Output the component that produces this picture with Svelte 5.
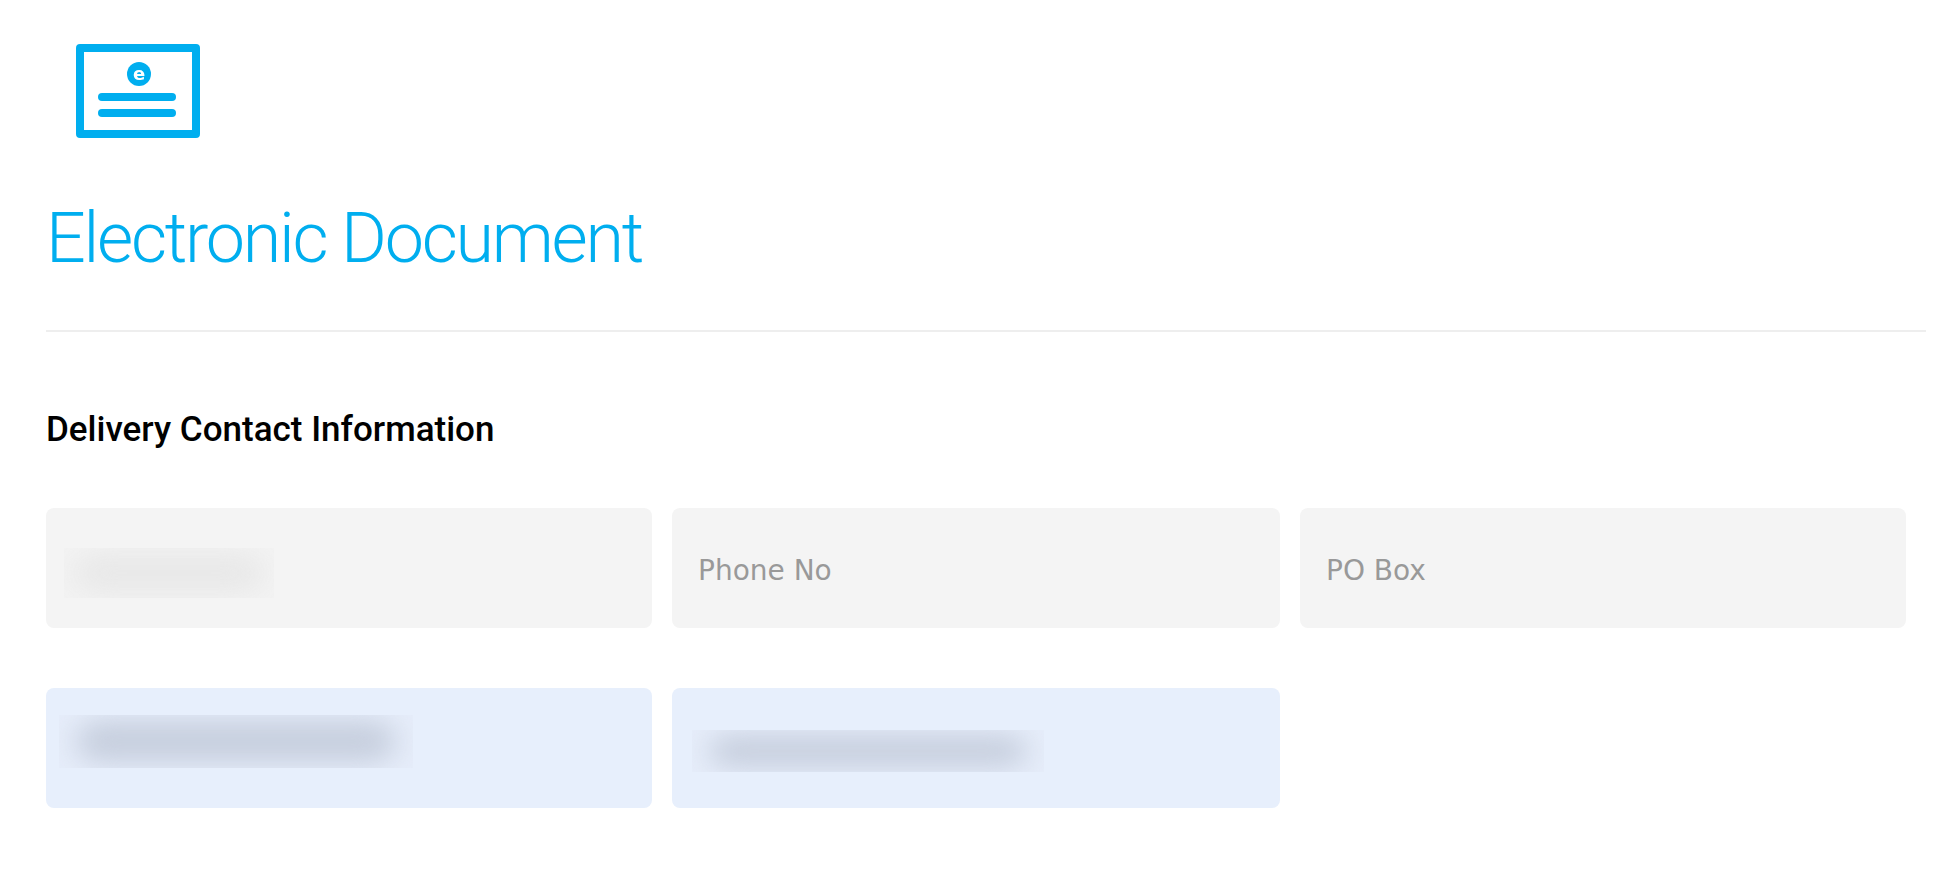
<script>
  const rows = [
    [
      { tone: 'grey', patch: 'patch-name' },
      { tone: 'grey', label: 'Phone No' },
      { tone: 'grey', label: 'PO Box' }
    ],
    [
      { tone: 'blue', patch: 'patch-mail' },
      { tone: 'blue', patch: 'patch-address' }
    ]
  ];
</script>

<div class="page">
  <svg class="logo" width="124" height="94" viewBox="0 0 124 94" aria-hidden="true">
    <rect x="4" y="4" width="116" height="86" fill="none" stroke="#00aeef" stroke-width="8" stroke-linejoin="round" />
    <circle cx="63" cy="30" r="12" fill="#00aeef" />
    <text x="63" y="36" text-anchor="middle" class="logo-e">e</text>
    <rect x="22" y="49" width="78" height="8" rx="4" fill="#00aeef" />
    <rect x="22" y="65" width="78" height="8" rx="4" fill="#00aeef" />
  </svg>

  <h1>Electronic Document</h1>
  <hr />
  <h2>Delivery Contact Information</h2>

  <div class="fields">
    {#each rows as row}
      {#each row as field}
        <div class="field {field.tone}">
          {#if field.label}
            <span class="label">{field.label}</span>
          {:else}
            <div class="patch {field.patch}"><div class="smear"></div></div>
          {/if}
        </div>
      {/each}
    {/each}
  </div>
</div>

<style>
  :global(body) {
    background: #fff;
  }
  .page {
    padding: 44px 20px 0 46px;
  }
  .logo {
    display: block;
    margin-left: 30px;
    filter: blur(0.7px);
  }
  .logo-e {
    font-family: 'DejaVu Sans', sans-serif;
    font-size: 18px;
    font-weight: 700;
    fill: #fff;
  }
  h1 {
    margin: 60px 0 0;
    font-family: 'Roboto', sans-serif;
    font-size: 70px;
    font-weight: 300;
    letter-spacing: -2.25px;
    line-height: 80px;
    color: #00aeef;
  }
  hr {
    margin: 52px 0 0;
    border: 0;
    height: 2px;
    background: #eee;
  }
  h2 {
    margin: 76px 0 0;
    font-family: 'Roboto', sans-serif;
    font-size: 35px;
    font-weight: 500;
    line-height: 44px;
    color: #000;
  }
  .fields {
    display: grid;
    grid-template-columns: 606px 608px 606px;
    gap: 60px 20px;
    margin: 56px 0 0;
  }
  .field {
    height: 120px;
    border-radius: 8px;
    display: flex;
    align-items: center;
  }
  .grey {
    background: #f4f4f4;
  }
  .blue {
    background: #e7effc;
  }
  .label {
    padding: 4px 0 0 26px;
    font-family: 'DejaVu Sans', sans-serif;
    font-size: 28px;
    color: #999;
  }
  .patch {
    overflow: hidden;
    align-self: flex-start;
  }
  .grey .patch {
    background: #f3f3f3;
  }
  .blue .patch {
    background: #e6edfa;
  }
  .smear {
    width: 100%;
    height: 100%;
    border-radius: 24px;
    filter: blur(16px);
    transform: scale(0.9, 0.8);
  }
  .grey .smear {
    background: #e8e8e8;
  }
  .blue .smear {
    background: #c7cfde;
  }
  .patch-name {
    width: 210px;
    height: 50px;
    margin: 40px 0 0 18px;
  }
  .patch-mail {
    width: 354px;
    height: 53px;
    margin: 27px 0 0 13px;
  }
  .patch-address {
    width: 352px;
    height: 42px;
    margin: 42px 0 0 20px;
  }
</style>
